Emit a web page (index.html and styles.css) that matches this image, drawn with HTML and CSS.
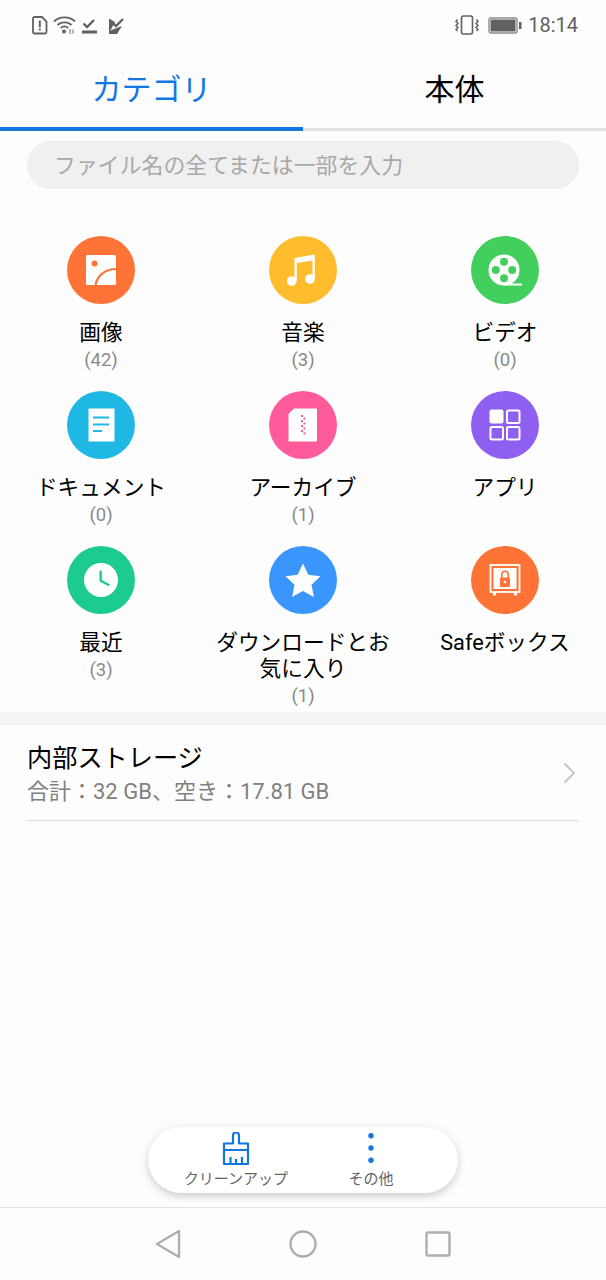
FILE: index.html
```html
<!DOCTYPE html>
<html lang="ja">
<head>
    <meta charset="UTF-8">
    <meta name="viewport" content="width=device-width, initial-scale=1.0">
    <title>ファイル</title>
    <link rel="stylesheet" href="styles.css">
</head>
<body>
    <div class="status-bar">
        <div class="status-group">
            <svg class="status-icon" width="16" height="19" viewBox="0 0 16 19"><path d="M2.500 1h7.500L14.500 5.500V16a1.500 1.500 0 0 1-1.500 1.500H2.500A1.500 1.500 0 0 1 1 16V2.500A1.500 1.500 0 0 1 2.500 1z" fill="none" stroke="#616161" stroke-width="1.800"/><path d="M6.800 4.500h2v6.800h-2zM6.800 12.500h2v2h-2z" fill="#616161"/></svg>
            <svg class="status-icon" width="24" height="20" viewBox="0 0 24 20"><g fill="none" stroke="#616161" stroke-width="1.800"><path d="M1 6.500C6.500 1 16.500 1 22 6.500"/><path d="M4.500 10C8 6.500 15 6.500 18.500 10"/><path d="M7.800 13C10 11 13 11 15.200 13"/></g><circle cx="11" cy="16.500" r="2" fill="#616161"/><path d="M17 14v5M20 14.500v4" stroke="#999" stroke-width="1.500"/></svg>
            <svg class="status-icon" width="15" height="18" viewBox="0 0 15 18"><path d="M1.500 7.500l3.500 3.500 7-7" fill="none" stroke="#616161" stroke-width="2.400"/><rect y="14.500" width="15" height="3" fill="#616161"/></svg>
            <svg class="status-icon icon-last" width="16" height="17" viewBox="0 0 16 17"><path d="M1 1.500l6 3.500-6 11z" fill="#616161"/><path d="M1 14l13-5-5 8H1z" fill="#616161"/><path d="M5 6l3 3 7-7" fill="none" stroke="#616161" stroke-width="2.400"/></svg>
        </div>
        <div class="status-group">
            <svg class="status-icon" width="24" height="20" viewBox="0 0 24 20"><rect x="6.500" y="1" width="11" height="18" rx="2" fill="none" stroke="#616161" stroke-width="1.600"/><path d="M2.500 4.500L1 6.500l2 2-2 2 2 2-2 2 1.500 1.500M21.500 4.500L23 6.500l-2 2 2 2-2 2 2 2-1.500 1.500" fill="none" stroke="#616161" stroke-width="1.500"/></svg>
            <svg class="status-icon battery" width="34" height="17" viewBox="0 0 34 17"><rect x="1" y="1" width="28" height="15" rx="2" fill="none" stroke="#8a8a8a" stroke-width="1.400"/><rect x="2.500" y="2.500" width="25" height="12" fill="#616161"/><rect x="31" y="5" width="2.500" height="7" fill="#616161"/></svg>
            <span class="clock">18:14</span>
        </div>
    </div>

    <div class="tabs">
        <div class="tab tab-active">カテゴリ</div>
        <div class="tab">本体</div>
    </div>

    <div class="search-box">ファイル名の全てまたは一部を入力</div>

    <div class="category-grid">
        <div class="category">
            <div class="category-icon bg-orange">
                <svg width="32" height="32" viewBox="0 0 32 32"><rect x="1" y="1" width="30" height="30" rx="1.500" fill="#fff"/><circle cx="9.500" cy="9.500" r="3" fill="#ff7336"/><path d="M10.500 31C12 22 20 15 31 15" fill="none" stroke="#ff7336" stroke-width="2.200"/></svg>
            </div>
            <div class="category-name">画像</div>
            <div class="category-count">(42)</div>
        </div>
        <div class="category">
            <div class="category-icon bg-yellow">
                <svg width="34" height="34" viewBox="0 0 34 34"><circle cx="5.700" cy="28" r="4.800" fill="#fff"/><circle cx="24" cy="26" r="4.800" fill="#fff"/><path d="M8.500 28V5L28.800 1.500V26h-2.300V7.500L10.800 10V28z" fill="#fff"/></svg>
            </div>
            <div class="category-name">音楽</div>
            <div class="category-count">(3)</div>
        </div>
        <div class="category">
            <div class="category-icon bg-green">
                <svg width="34" height="32" viewBox="0 0 34 32"><circle cx="16" cy="16" r="15.500" fill="#fff"/><rect x="16" y="29.500" width="18" height="2" fill="#fff"/><g fill="#43cf5e"><circle cx="16" cy="7.800" r="4"/><circle cx="16" cy="24.200" r="4"/><circle cx="7.800" cy="16" r="4"/><circle cx="24.200" cy="16" r="4"/></g></svg>
            </div>
            <div class="category-name">ビデオ</div>
            <div class="category-count">(0)</div>
        </div>

        <div class="category">
            <div class="category-icon bg-blue">
                <svg width="28" height="34" viewBox="0 0 28 34"><path d="M1.500 0.500H27.500V33.500H1.500z" fill="#fff"/><path d="M6 9.500H22M6 16.500H22M6 23H15" stroke="#1fb8e4" stroke-width="2" fill="none"/></svg>
            </div>
            <div class="category-name">ドキュメント</div>
            <div class="category-count">(0)</div>
        </div>
        <div class="category">
            <div class="category-icon bg-pink">
                <svg width="30" height="34" viewBox="0 0 30 34"><path d="M6 0.500H29V33.500H0.500V6z" fill="#fff"/><path d="M13 7h2v2h-2zM15.500 9.500h2v2h-2zM13 12h2v2h-2zM15.500 14.500h2v2h-2zM13 17h2v2h-2zM15.500 19.500h2v2h-2zM13 22h2v2h-2zM15.500 24.500h2v2h-2z" fill="#fd5b9a"/></svg>
            </div>
            <div class="category-name">アーカイブ</div>
            <div class="category-count">(1)</div>
        </div>
        <div class="category">
            <div class="category-icon bg-purple">
                <svg width="32" height="32" viewBox="0 0 32 32"><rect x="0.500" y="0.500" width="14" height="14" rx="2" fill="#fff"/><g fill="none" stroke="#fff" stroke-width="2"><rect x="18" y="1.500" width="12.500" height="12.500" rx="1.500"/><rect x="1.500" y="18" width="12.500" height="12.500" rx="1.500"/><rect x="18" y="18" width="12.500" height="12.500" rx="1.500"/></g></svg>
            </div>
            <div class="category-name">アプリ</div>
        </div>

        <div class="category">
            <div class="category-icon bg-teal">
                <svg width="34" height="34" viewBox="0 0 34 34"><circle cx="17" cy="17" r="17" fill="#fff"/><path d="M16.700 7.700V17.700L25.300 22.300" fill="none" stroke="#1ccb8f" stroke-width="2.400"/></svg>
            </div>
            <div class="category-name">最近</div>
            <div class="category-count">(3)</div>
        </div>
        <div class="category">
            <div class="category-icon bg-sky">
                <svg width="36" height="35" viewBox="0 0 36 35"><path d="M18 0.500l5.300 11.300 12.200 1.500-9 8.500 2.400 12.200L18 28l-10.900 6 2.400-12.200-9-8.500 12.200-1.500z" fill="#fff"/></svg>
            </div>
            <div class="category-name">ダウンロードとお気に入り</div>
            <div class="category-count">(1)</div>
        </div>
        <div class="category">
            <div class="category-icon bg-orange">
                <svg width="32" height="33" viewBox="0 0 32 33"><rect x="1.500" y="1" width="29" height="27" fill="none" stroke="#fff" stroke-width="1.800"/><rect x="4.500" y="4" width="23" height="21" fill="#fff"/><rect x="4" y="28" width="3" height="3.500" fill="#fff"/><rect x="25" y="28" width="3" height="3.500" fill="#fff"/><path d="M12.800 14v-3.500a3.200 3.200 0 0 1 6.400 0V14" fill="none" stroke="#ff7336" stroke-width="1.600"/><rect x="11" y="13.500" width="10" height="9.500" rx="1" fill="#ff7336"/><circle cx="16" cy="18" r="1.300" fill="#fff"/></svg>
            </div>
            <div class="category-name">Safeボックス</div>
        </div>
    </div>

    <div class="section-gap"></div>

    <div class="storage">
        <div class="storage-row">
            <div class="storage-text">
                <div class="storage-name">内部ストレージ</div>
                <div class="storage-info">合計：32 GB、空き：17.81 GB</div>
            </div>
            <svg width="13" height="22" viewBox="0 0 13 22"><path d="M1.500 1.500L11 11 1.500 20.500" fill="none" stroke="#c4c4c4" stroke-width="1.800"/></svg>
        </div>
    </div>

    <div class="toolbar">
        <div class="toolbar-item">
            <svg width="28" height="34" viewBox="0 0 28 34"><g fill="none" stroke="#1277e1" stroke-width="2.200" stroke-linejoin="round"><path d="M2 32h24V11.500H17V3.500a3 3 0 0 0-6 0v8H2z"/><path d="M2 18h24M8.500 32v-7M14 32v-5M20 32v-7"/></g></svg>
            <span>クリーンアップ</span>
        </div>
        <div class="toolbar-item">
            <svg width="8" height="34" viewBox="0 0 8 34"><g fill="#1277e1"><circle cx="4" cy="3.700" r="2.700"/><circle cx="4" cy="16" r="2.700"/><circle cx="4" cy="28.300" r="2.700"/></g></svg>
            <span>その他</span>
        </div>
    </div>

    <div class="nav-bar">
        <svg width="26" height="30" viewBox="0 0 26 30"><path d="M24 2v26L2 15z" fill="none" stroke="#aeaeae" stroke-width="2.400" stroke-linejoin="round"/></svg>
        <svg width="28" height="28" viewBox="0 0 28 28"><circle cx="14" cy="14" r="12.500" fill="none" stroke="#aeaeae" stroke-width="2.400"/></svg>
        <svg width="26" height="26" viewBox="0 0 26 26"><rect x="1.500" y="1.500" width="23" height="23" rx="1.500" fill="none" stroke="#aeaeae" stroke-width="2.400"/></svg>
    </div>
</body>
</html>
```

FILE: styles.css
```css
* {
    box-sizing: border-box;
}

html, body {
    height: 100%;
}

body {
    margin: 0;
    height: 1280px;
    display: flex;
    flex-direction: column;
    overflow: hidden;
    background-color: #fdfdfd;
    color: #000;
    font-family: Roboto, "Noto Sans CJK JP", sans-serif;
}

.status-bar {
    height: 50px;
    padding: 0 28px 0 32px;
    display: flex;
    align-items: center;
    justify-content: space-between;
}

.status-group {
    display: flex;
    align-items: center;
    gap: 5px;
}

.status-icon {
    display: block;
}

.icon-last {
    margin-left: 6px;
}

.battery {
    margin-left: 4px;
}

.clock {
    margin-left: 1px;
    font-size: 20px;
    color: #616161;
}

.tabs {
    height: 81px;
    display: flex;
    border-bottom: 3px solid #e2e2e2;
}

.tab {
    flex: 1;
    height: 81px;
    padding-top: 17px;
    text-align: center;
    font-size: 30px;
    line-height: 46px;
}

.tab-active {
    color: #1277e1;
    border-bottom: 4px solid #1277e1;
}

.search-box {
    height: 48px;
    margin: 10px 27px 0;
    padding: 1px 0 0 27px;
    border-radius: 24px;
    background-color: #f0f0f0;
    color: #a8a8a8;
    font-size: 21.9px;
    line-height: 48px;
}

.category-grid {
    display: grid;
    grid-template-columns: repeat(3, 202px);
    grid-template-rows: 155px 155px 166px;
    padding-top: 47px;
    height: 523px;
}

.category {
    display: flex;
    flex-direction: column;
    align-items: center;
    text-align: center;
}

.category-icon {
    width: 68px;
    height: 68px;
    flex-shrink: 0;
    margin-bottom: 16px;
    border-radius: 50%;
    display: flex;
    align-items: center;
    justify-content: center;
}

.bg-orange { background-color: #ff7336; }
.bg-yellow { background-color: #ffbd2e; }
.bg-green { background-color: #43cf5e; }
.bg-blue { background-color: #1fb8e4; }
.bg-pink { background-color: #fd5b9a; }
.bg-purple { background-color: #8e5ff0; }
.bg-teal { background-color: #1ccb8f; }
.bg-sky { background-color: #3a96fc; }

.category-name {
    width: 180px;
    font-size: 21.7px;
    line-height: 26px;
}

.category-count {
    margin-top: 1px;
    font-size: 18.5px;
    line-height: 26px;
    color: #8a8a8a;
}

.section-gap {
    height: 13px;
    background-color: #f5f5f5;
}

.storage {
    padding: 0 27px;
}

.storage-row {
    height: 96px;
    padding-right: 3px;
    display: flex;
    align-items: center;
    justify-content: space-between;
    border-bottom: 1px solid #dcdcdc;
}

.storage-text {
    padding-top: 3px;
}

.storage-name {
    font-size: 25.2px;
    line-height: 34px;
}

.storage-info {
    margin-top: 1px;
    font-size: 22px;
    line-height: 30px;
    color: #808080;
}

.toolbar {
    width: 310px;
    height: 66px;
    margin: auto auto 14px;
    padding: 5px 27px 0 28px;
    display: flex;
    justify-content: space-between;
    border-radius: 33px;
    background-color: #fff;
    box-shadow: 0 3px 8px rgba(0,0,0,0.2);
}

.toolbar-item {
    width: 120px;
    display: flex;
    flex-direction: column;
    align-items: center;
    font-size: 15px;
    line-height: 20px;
    white-space: nowrap;
    color: #666;
}

.toolbar-item svg {
    display: block;
    flex-shrink: 0;
    margin-bottom: 3px;
}

.nav-bar {
    height: 73px;
    padding: 0 155px;
    display: flex;
    align-items: center;
    justify-content: space-between;
    border-top: 1px solid #e2e2e2;
}
```
